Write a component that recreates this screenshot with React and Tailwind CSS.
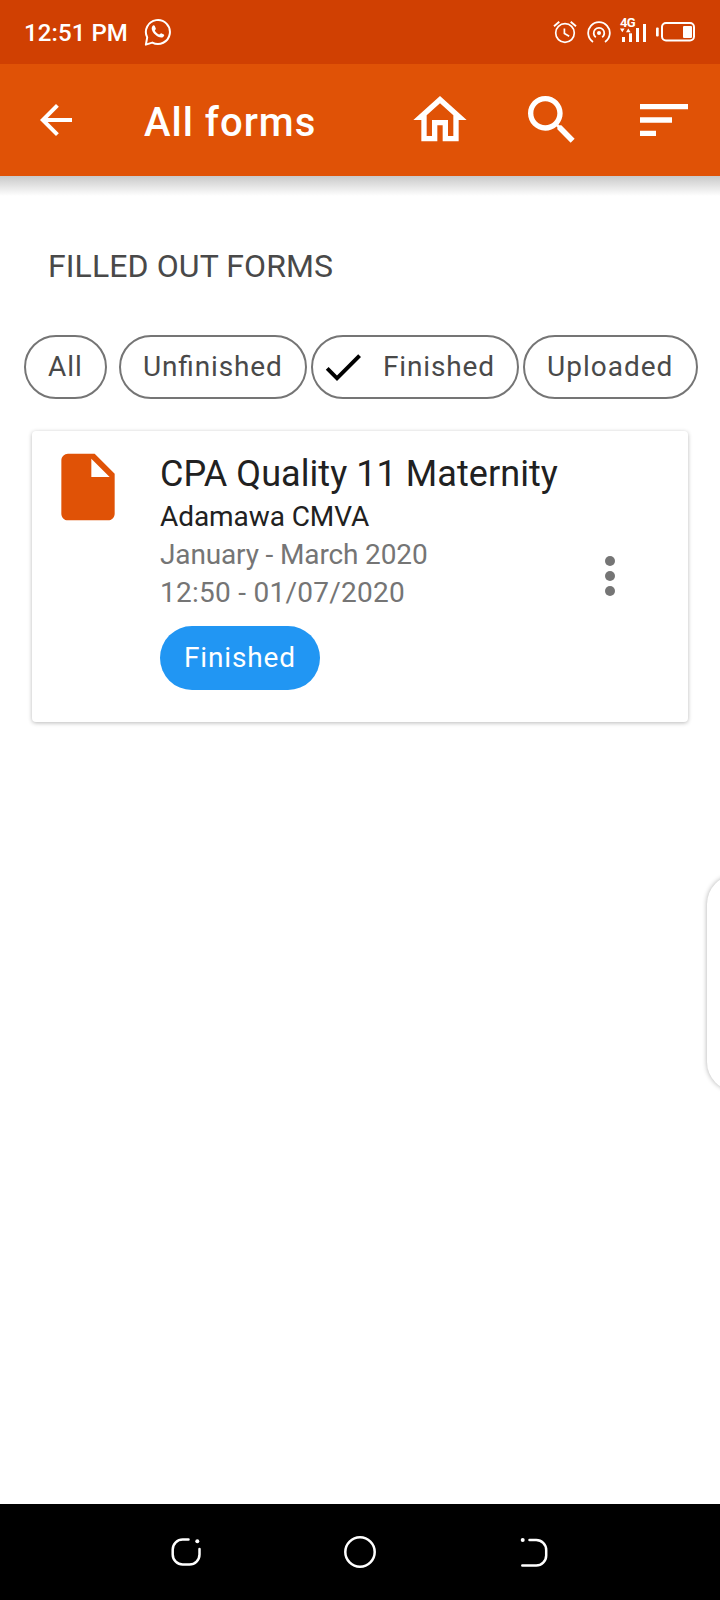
const ROBOTO = "font-['Roboto','Noto_Sans',sans-serif]";

function StatusBar() {
  return (
    <div className="flex h-16 shrink-0 items-center justify-between bg-[#d04002] pl-6 pr-6 text-white">
      <div className="flex items-center">
        <span className="mt-[2px] w-[120px] whitespace-nowrap text-[24px] font-medium leading-[28px] tracking-[0.1px]">12:51 PM</span>
        <svg width="28" height="30" viewBox="0 0 28 30" fill="none" className="shrink-0">
          <path d="M1.9 27.6 3.2 20.4A12 12 0 1 1 8.3 25.6Z" stroke="currentColor" strokeWidth="2" strokeLinejoin="round" />
          <path d="M8.2 9.4c.8-1.3 2-1.5 2.6-.3l1 2.3c.3.8-1 1.5-1 2.2.8 1.8 2.3 3.1 4.2 3.9.9.2 1.4-1.5 2.2-1.3l2.6 1.3c.9.6.2 2-1 2.7-2 1.1-5.4-.5-7.7-2.7-2.4-2.3-4.3-5.7-2.9-8.1Z" fill="currentColor" />
        </svg>
      </div>
      <div className="flex items-center">
        <svg width="24" height="24" viewBox="0 0 24 24" fill="none" stroke="currentColor" className="mr-[10px]">
          <circle cx="12" cy="13" r="9.3" strokeWidth="1.7" />
          <path d="M1 6.3 6.3 1.7M17.7 1.7 23 6.3" strokeWidth="1.9" />
          <path d="M11.4 8.5v5l4.8 2.7" strokeWidth="1.7" />
        </svg>
        <svg width="24" height="24" viewBox="0 0 24 24" fill="none" stroke="currentColor" strokeWidth="1.8" className="mr-[8px]">
          <circle cx="12" cy="13" r="2" fill="currentColor" stroke="none" />
          <path d="M8.8 17.3A5.3 5.3 0 1 1 15.2 17.3" />
          <path d="M6 22A10.8 10.8 0 1 1 18 22" />
        </svg>
        <div className="mb-[4px] mr-[9px] flex h-[26px] w-[28px] flex-col">
          <span className="h-[11px] pl-px text-[13px] font-bold leading-[11px] tracking-[-0.6px]">4G</span>
          <svg width="28" height="20" viewBox="0 0 28 20" fill="currentColor" className="-mt-[4px] shrink-0">
            <path d="M1 4.500h4.600L3.300 8.300ZM7 8.300h4.600L9.300 4.500Z" />
            <rect x="3" y="13" width="3" height="5" />
            <rect x="10" y="9.300" width="3" height="8.700" />
            <rect x="17" y="4" width="3" height="14" />
            <rect x="24" y="0" width="3" height="18" />
          </svg>
        </div>
        <svg width="40" height="20" viewBox="0 0 40 20" fill="none">
          <rect x="0" y="5.5" width="2.7" height="9" rx="1" fill="currentColor" />
          <rect x="6" y="1" width="32" height="17.5" rx="4" stroke="currentColor" strokeWidth="2" />
          <rect x="27" y="4" width="9" height="12" rx="1" fill="currentColor" />
        </svg>
      </div>
    </div>
  );
}

function ActionIcon({ path }) {
  return (
    <button className="flex w-[112px] justify-center">
      <svg width="64" height="64" viewBox="0 0 24 24" fill="currentColor">
        <path d={path} />
      </svg>
    </button>
  );
}

function AppBar() {
  return (
    <header className="flex h-28 shrink-0 items-center bg-[#e05206] text-white">
      <button className="ml-8 w-12">
        <svg width="48" height="48" viewBox="0 0 24 24" fill="currentColor">
          <path d="M20 11H7.83l5.59-5.59L12 4l-8 8 8 8 1.41-1.41L7.83 13H20v-2z" />
        </svg>
      </button>
      <h1 className="ml-16 mt-[5px] flex-1 whitespace-nowrap text-[40px] font-medium leading-[48px] tracking-[1px]">All forms</h1>
      <ActionIcon path="M12 5.69l5 4.5V18h-2v-6H9v6H7v-7.81l5-4.5M12 3L2 12h3v8h6v-6h2v6h6v-8h3L12 3z" />
      <ActionIcon path="M15.5 14h-.79l-.28-.27C15.41 12.59 16 11.11 16 9.5 16 5.91 13.09 3 9.5 3S3 5.91 3 9.5 5.91 16 9.5 16c1.61 0 3.09-.59 4.23-1.57l.27.28v.79l5 4.99L20.49 19l-4.99-5zm-6 0C7.01 14 5 11.99 5 9.5S7.01 5 9.5 5 14 7.01 14 9.5 11.99 14 9.5 14z" />
      <ActionIcon path="M3 18h6v-2H3v2zM3 6v2h18V6H3zm0 7h12v-2H3v2z" />
    </header>
  );
}

function Chip({ label, checked, className }) {
  return (
    <button className={`flex h-16 shrink-0 items-center whitespace-nowrap rounded-full border-2 border-[#757575] text-[28px] leading-[38px] text-[#494949] [font-feature-settings:'liga'_1] ${className}`}>
      {checked && (
        <svg width="48" height="48" viewBox="0 0 24 24" className="mr-[16px] text-black" fill="currentColor">
          <path d="M9 16.2L4.8 12l-1.4 1.4L9 19 21 7l-1.4-1.4L9 16.2z" />
        </svg>
      )}
      {label}
    </button>
  );
}

function FormCard() {
  return (
    <article className="ml-8 mt-8 flex h-[291px] w-[656px] rounded-[4px] bg-white pt-4 shadow-[0_1px_4px_rgba(0,0,0,0.28)]">
      <svg width="80" height="80" viewBox="0 0 24 24" className="ml-4 shrink-0 text-[#e05206]" fill="currentColor">
        <path d="M6 2c-1.1 0-1.99.9-1.99 2L4 20c0 1.1.89 2 1.99 2H18c1.1 0 2-.9 2-2V8l-6-6H6zm7 7V3.5L18.5 9H13z" />
      </svg>
      <div className="ml-8 mt-[3px] flex w-[420px] flex-col items-start whitespace-nowrap text-[28px] leading-[38px]">
        <h2 className="text-[36px] leading-[48px] tracking-[0.06px] text-[#212121]">CPA Quality 11 Maternity</h2>
        <p className="tracking-[-0.08px] text-[#212121]">Adamawa CMVA</p>
        <p className="tracking-[-0.14px] text-[#757575]">January - March 2020</p>
        <p className="tracking-[0.26px] text-[#757575]">12:50 - 01/07/2020</p>
        <span className="mt-[14px] flex h-16 w-[160px] items-center rounded-full bg-[#2196f3] pl-6 tracking-[0.85px] text-white">Finished</span>
      </div>
      <button className="mt-[99px] h-[60px] w-[60px] text-[#757575]">
        <svg width="60" height="60" viewBox="0 0 24 24" fill="currentColor">
          <circle cx="12" cy="6" r="2" />
          <circle cx="12" cy="12" r="2" />
          <circle cx="12" cy="18" r="2" />
        </svg>
      </button>
    </article>
  );
}

function NavBar() {
  return (
    <nav className="flex h-24 shrink-0 items-center justify-center bg-black text-white">
      <svg width="32" height="32" viewBox="0 0 32 32" fill="none" stroke="currentColor" strokeWidth="2.5" strokeLinecap="round" className="mr-[142px]">
        <path d="M18.500 3.500H13A10 10 0 0 0 2.700 13.500V18.500A10 10 0 0 0 13 28.500H19.500A10 10 0 0 0 29.500 18.500V13" />
        <circle cx="27.3" cy="5.2" r="2" fill="currentColor" stroke="none" />
      </svg>
      <svg width="32" height="32" viewBox="0 0 32 32" fill="none" stroke="currentColor" strokeWidth="2.5">
        <circle cx="16" cy="16" r="14.7" />
      </svg>
      <svg width="32" height="32" viewBox="0 0 32 32" fill="none" stroke="currentColor" strokeWidth="2.5" strokeLinecap="round" className="ml-[142px]">
        <path d="M11.500 4H18A10 10 0 0 1 28.200 14V19.500A10 10 0 0 1 18 29.500H4.300" />
        <circle cx="4.7" cy="4" r="2" fill="currentColor" stroke="none" />
      </svg>
    </nav>
  );
}

export default function App() {
  return (
    <div className={`relative flex h-[1600px] w-[720px] flex-col overflow-hidden bg-white ${ROBOTO}`}>
      <StatusBar />
      <AppBar />
      <div className="h-5 shrink-0 bg-linear-to-b from-[#c9c9c9] to-white" />
      <main className="flex-1">
        <h2 className="ml-12 mt-[49px] h-[42px] whitespace-nowrap text-[32px] leading-[42px] tracking-[0.1px] text-[#494949]">FILLED OUT FORMS</h2>
        <div className="ml-6 mt-[48px] flex">
          <Chip label="All" className="w-[83px] pl-[22px] tracking-[1px]" />
          <Chip label="Unfinished" className="ml-3 w-[188px] pl-[22px] tracking-[0.85px]" />
          <Chip label="Finished" checked className="ml-1 w-[208px] pl-[6px] tracking-[0.85px]" />
          <Chip label="Uploaded" className="ml-1 w-[175px] pl-[22px] tracking-[1px]" />
        </div>
        <FormCard />
      </main>
      <NavBar />
      <div className="absolute left-[707px] top-[875px] h-[216px] w-[60px] rounded-[29px] bg-white shadow-[0_0_5px_rgba(0,0,0,0.32)]" />
    </div>
  );
}
